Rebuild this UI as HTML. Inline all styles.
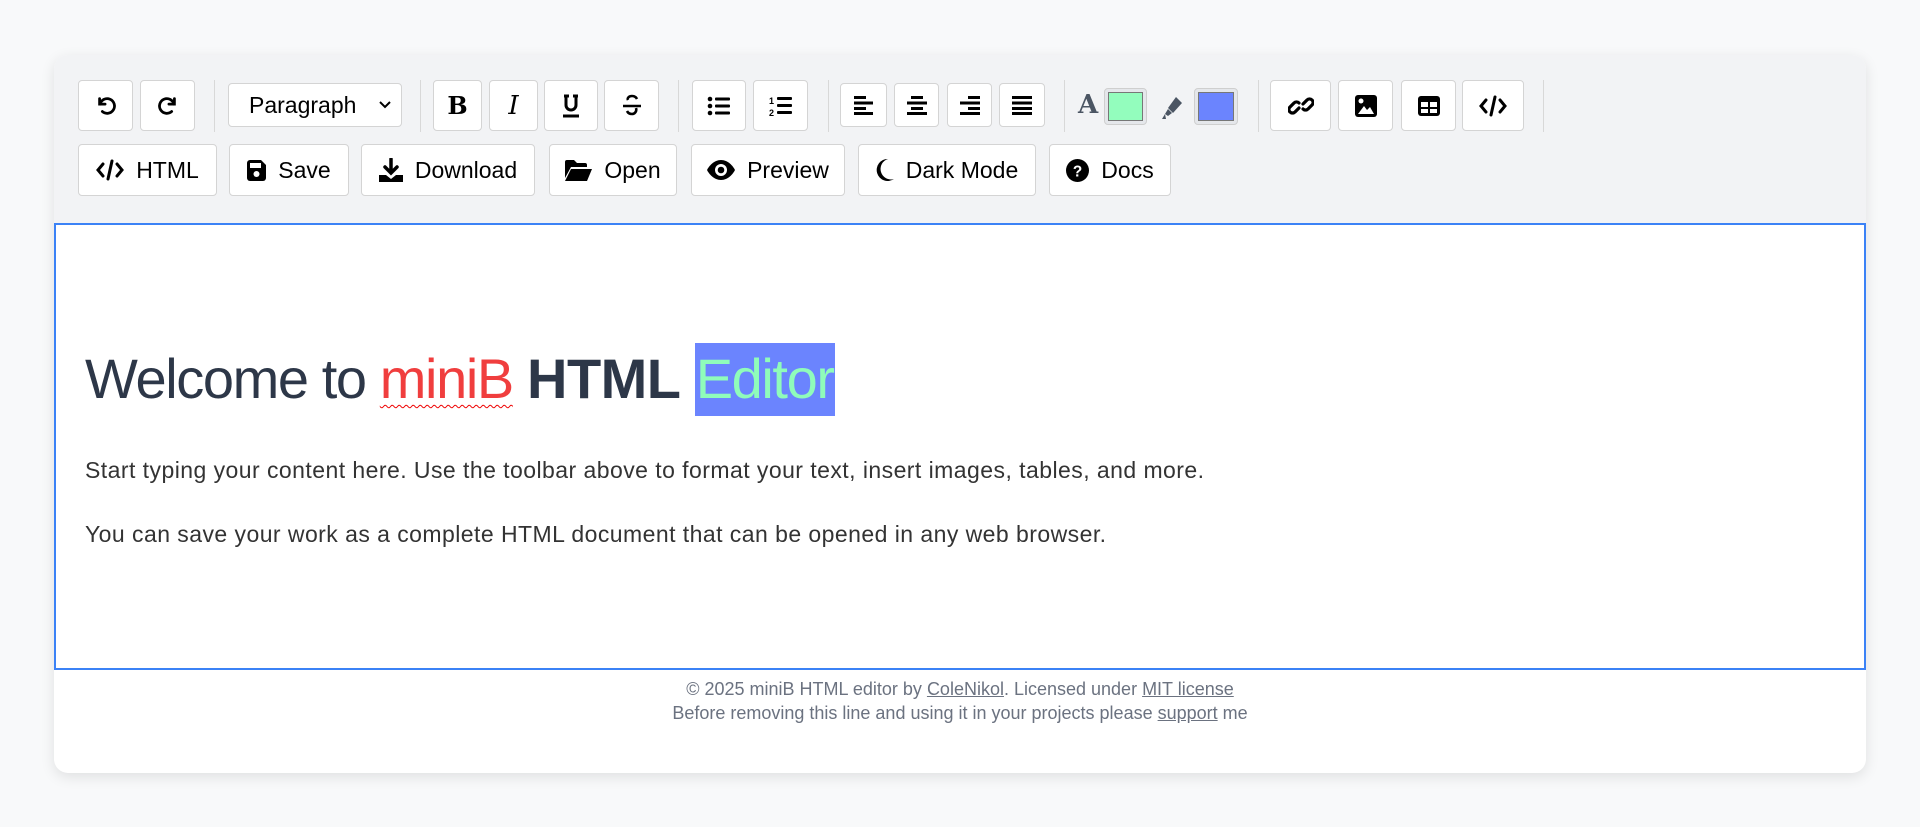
<!DOCTYPE html>
<html><head><meta charset="utf-8">
<style>
*{box-sizing:border-box;margin:0;padding:0}
body{width:1920px;height:827px;background:#f8f9fa;font-family:"Liberation Sans",Arial,sans-serif;position:relative;overflow:hidden}
.card{position:absolute;left:54px;top:55px;width:1812px;height:718px;background:#fff;border-radius:14px;box-shadow:0 4px 14px rgba(0,0,0,.10);overflow:hidden}
.tb{position:absolute;left:0;top:0;width:100%;height:168px;background:#f2f3f5}
.b{position:absolute;background:#fff;border:1px solid #d4d4d4;border-radius:4px;display:flex;align-items:center;justify-content:center;font-size:23px;color:#000}
.b svg{display:block}
.b span{margin-left:12px}
.sep{position:absolute;width:1px;background:#d8d8d8;top:25px;height:52px}
.ed{position:absolute;left:0;top:168px;width:1812px;height:447px;border:2px solid #3b82f6;background:#fff}
h1{position:absolute;left:29px;top:118px;font-size:56px;letter-spacing:-1.4px;font-weight:normal;color:#2d3748;white-space:nowrap;line-height:72px}
p.t{position:absolute;left:29px;font-size:23px;letter-spacing:0.45px;color:#333;white-space:nowrap}
.foot{position:absolute;left:0;top:622px;width:100%;text-align:center;font-size:18px;line-height:24px;color:#6b7280}
.foot u{color:#6b7280}
</style></head><body>
<div class="card">
<div class="tb"></div>
<div class="b" style="left:24px;top:25px;width:55px;height:51px"><svg width="22" height="22" viewBox="0 0 24 24" fill="none" stroke="#000" stroke-width="3" stroke-linecap="round"><path d="M5 4v6h6"/><path d="M5.5 10A8 8 0 1 1 8 18"/></svg></div>
<div class="b" style="left:86px;top:25px;width:55px;height:51px"><svg width="22" height="22" viewBox="0 0 24 24" fill="none" stroke="#000" stroke-width="3" stroke-linecap="round"><path d="M19 4v6h-6"/><path d="M18.5 10A8 8 0 1 0 16 18"/></svg></div>
<div class="sep" style="left:160px"></div>
<div class="b" style="left:174px;top:28px;width:174px;height:44px;font-size:23px;justify-content:flex-start;padding-left:20px">Paragraph<svg style="position:absolute;right:10px" width="12" height="8" viewBox="0 0 12 8" fill="none" stroke="#000" stroke-width="2"><path d="M1 1l5 5 5-5"/></svg></div>
<div class="sep" style="left:366px"></div>
<div class="b" style="left:379px;top:25px;width:49px;height:51px;font-family:'DejaVu Serif',serif;font-weight:bold;font-size:24px">B</div>
<div class="b" style="left:435px;top:25px;width:49px;height:51px;font-family:'DejaVu Serif',serif;font-style:italic;font-size:26px">I</div>
<div class="b" style="left:490px;top:25px;width:54px;height:51px"><svg width="22" height="24" viewBox="0 0 22 24" fill="none" stroke="#000" stroke-width="3"><path d="M4 2h5M13 2h5M6 2v9a5 5 0 0 0 10 0V2"/><path d="M3 22h16"/></svg></div>
<div class="b" style="left:550px;top:25px;width:55px;height:51px"><svg width="22" height="24" viewBox="0 0 22 24" fill="none" stroke="#000" stroke-width="2.6"><path d="M16 5c-1-2-3-3-5-3-3 0-5 2-4 4M2 12h18M15 14c1 3-1 6-4 6-2 0-4-1-5-3"/></svg></div>
<div class="sep" style="left:624px"></div>
<div class="b" style="left:638px;top:25px;width:54px;height:51px"><svg width="24" height="20" viewBox="0 0 24 20"><g fill="#000"><circle cx="3" cy="3" r="2.3"/><circle cx="3" cy="10" r="2.3"/><circle cx="3" cy="17" r="2.3"/><rect x="8" y="1.5" width="15" height="3" rx="1"/><rect x="8" y="8.5" width="15" height="3" rx="1"/><rect x="8" y="15.5" width="15" height="3" rx="1"/></g></svg></div>
<div class="b" style="left:699px;top:25px;width:55px;height:51px"><svg width="24" height="22" viewBox="0 0 24 22"><g fill="#000"><text x="0" y="9" font-size="9" font-weight="bold" font-family="Liberation Sans">1</text><text x="0" y="21" font-size="9" font-weight="bold" font-family="Liberation Sans">2</text><rect x="8" y="2" width="15" height="3" rx="1"/><rect x="8" y="9" width="15" height="3" rx="1"/><rect x="8" y="16" width="15" height="3" rx="1"/></g></svg></div>
<div class="sep" style="left:774px"></div>
<div class="b" style="left:786px;top:28px;width:47px;height:44px"><svg width="20" height="20" viewBox="0 0 20 20" fill="#000"><rect x="0" y="1" width="12" height="3"/><rect x="0" y="6.5" width="19" height="3"/><rect x="0" y="12" width="12" height="3"/><rect x="0" y="17" width="19" height="3"/></svg></div>
<div class="b" style="left:840px;top:28px;width:45px;height:44px"><svg width="20" height="20" viewBox="0 0 20 20" fill="#000"><rect x="4" y="1" width="12" height="3"/><rect x="0" y="6.5" width="20" height="3"/><rect x="4" y="12" width="12" height="3"/><rect x="0" y="17" width="20" height="3"/></svg></div>
<div class="b" style="left:893px;top:28px;width:45px;height:44px"><svg width="20" height="20" viewBox="0 0 20 20" fill="#000"><rect x="8" y="1" width="12" height="3"/><rect x="0" y="6.5" width="20" height="3"/><rect x="8" y="12" width="12" height="3"/><rect x="0" y="17" width="20" height="3"/></svg></div>
<div class="b" style="left:945px;top:28px;width:46px;height:44px"><svg width="20" height="20" viewBox="0 0 20 20" fill="#000"><rect x="0" y="1" width="20" height="3"/><rect x="0" y="6.5" width="20" height="3"/><rect x="0" y="12" width="20" height="3"/><rect x="0" y="17" width="20" height="3"/></svg></div>
<div class="sep" style="left:1010px"></div>
<div style="position:absolute;left:1024px;top:35px;font-family:'DejaVu Serif',serif;font-weight:bold;font-size:26px;color:#4b5563">A</div>
<div style="position:absolute;left:1050px;top:33px;width:43px;height:37px;background:#e5e7eb;border:1px solid #cfcfcf;border-radius:4px;padding:3px"><div style="width:100%;height:100%;background:#93fdbd;border:1px solid #777"></div></div>
<svg style="position:absolute;left:1108px;top:40px" width="22" height="26" viewBox="0 0 22 26"><path d="M14 2l6 6-9 10-5-5z" fill="#4b5563"/><path d="M6 14l-3 5 3 2 4-3" fill="#4b5563"/><path d="M3 19l-3 5h4z" fill="#4b5563"/></svg>
<div style="position:absolute;left:1140px;top:33px;width:44px;height:37px;background:#e5e7eb;border:1px solid #cfcfcf;border-radius:4px;padding:3px"><div style="width:100%;height:100%;background:#6b84fe;border:1px solid #777"></div></div>
<div class="sep" style="left:1204px"></div>
<div class="b" style="left:1216px;top:25px;width:61px;height:51px"><svg width="26" height="26" viewBox="0 0 26 26" fill="none" stroke="#000" stroke-width="3.2" stroke-linecap="round"><path d="M11 15l-4 4a3.5 3.5 0 0 1-5-5l4-4a3.5 3.5 0 0 1 5 0"/><path d="M15 11l4-4a3.5 3.5 0 0 1 5 5l-4 4a3.5 3.5 0 0 1-5 0"/></svg></div>
<div class="b" style="left:1284px;top:25px;width:55px;height:51px"><svg width="22" height="22" viewBox="0 0 22 22"><rect x="0" y="0" width="22" height="22" rx="3" fill="#000"/><circle cx="6" cy="6" r="2.5" fill="#fff"/><path d="M3 19l6-8 3 4 3-3 4 7z" fill="#fff"/></svg></div>
<div class="b" style="left:1347px;top:25px;width:55px;height:51px"><svg width="22" height="20" viewBox="0 0 22 20"><rect x="0" y="0" width="22" height="20" rx="3" fill="#000"/><rect x="3" y="6" width="7" height="5" fill="#fff"/><rect x="12" y="6" width="7" height="5" fill="#fff"/><rect x="3" y="13" width="7" height="4" fill="#fff"/><rect x="12" y="13" width="7" height="4" fill="#fff"/></svg></div>
<div class="b" style="left:1408px;top:25px;width:62px;height:51px"><svg width="28" height="22" viewBox="0 0 28 22" fill="none" stroke="#000" stroke-width="3" stroke-linecap="round"><path d="M7 5L2 11l5 6M21 5l5 6-5 6M16 2l-4 18"/></svg></div>
<div class="sep" style="left:1489px"></div>
<div class="b" style="left:24px;top:89px;width:139px;height:52px"><svg width="28" height="22" viewBox="0 0 28 22" fill="none" stroke="#000" stroke-width="3" stroke-linecap="round"><path d="M7 5L2 11l5 6M21 5l5 6-5 6M16 2l-4 18"/></svg><span>HTML</span></div>
<div class="b" style="left:175px;top:89px;width:120px;height:52px"><svg width="19" height="21" viewBox="0 0 19 21"><path d="M0 3a3 3 0 0 1 3-3h11l5 5v13a3 3 0 0 1-3 3H3a3 3 0 0 1-3-3z" fill="#000"/><rect x="3" y="3" width="11" height="5" fill="#fff"/><circle cx="9.5" cy="14" r="3" fill="#fff"/></svg><span>Save</span></div>
<div class="b" style="left:307px;top:89px;width:174px;height:52px"><svg width="24" height="24" viewBox="0 0 24 24"><path d="M12 1v13M6 9l6 6 6-6" stroke="#000" stroke-width="3.5" fill="none" stroke-linecap="round"/><path d="M0 17h7l5 4 5-4h7v7H0z" fill="#000"/></svg><span>Download</span></div>
<div class="b" style="left:495px;top:89px;width:128px;height:52px"><svg width="27" height="21" viewBox="0 0 27 21"><path d="M0 2a2 2 0 0 1 2-2h7l3 3h8a2 2 0 0 1 2 2v2H6L0 18z" fill="#000"/><path d="M6 9h21l-5 12H0z" fill="#000"/></svg><span>Open</span></div>
<div class="b" style="left:637px;top:89px;width:154px;height:52px"><svg width="28" height="20" viewBox="0 0 28 20"><path d="M14 0C7 0 2 6 0 10c2 4 7 10 14 10s12-6 14-10C26 6 21 0 14 0z" fill="#000"/><circle cx="14" cy="10" r="6" fill="#fff"/><circle cx="14" cy="10" r="3.3" fill="#000"/></svg><span>Preview</span></div>
<div class="b" style="left:804px;top:89px;width:178px;height:52px"><svg width="18" height="22" viewBox="0 0 18 22"><path d="M12 0A11 11 0 1 0 18 20 9 9 0 0 1 12 0z" fill="#000"/></svg><span>Dark Mode</span></div>
<div class="b" style="left:995px;top:89px;width:122px;height:52px"><svg width="23" height="23" viewBox="0 0 24 24"><circle cx="12" cy="12" r="12" fill="#000"/><text x="12" y="18" text-anchor="middle" font-size="16" font-weight="bold" fill="#fff" font-family="Liberation Sans">?</text></svg><span>Docs</span></div>
<div class="ed">
<h1>Welcome to <span style="color:#f03e3e;text-decoration:underline wavy #e00;text-decoration-thickness:1px;text-underline-offset:6px">miniB</span> <b style="letter-spacing:-0.5px">HTML</b> <span style="background:#6b84fe;color:#8ffcba;padding:4px 1px 6px">Editor</span></h1>
<p class="t" style="top:232px">Start typing your content here. Use the toolbar above to format your text, insert images, tables, and more.</p>
<p class="t" style="top:296px">You can save your work as a complete HTML document that can be opened in any web browser.</p>
</div>
<div class="foot">© 2025 miniB HTML editor by <u>ColeNikol</u>. Licensed under <u>MIT license</u><br>Before removing this line and using it in your projects please <u>support</u> me</div>
</div>
</body></html>
